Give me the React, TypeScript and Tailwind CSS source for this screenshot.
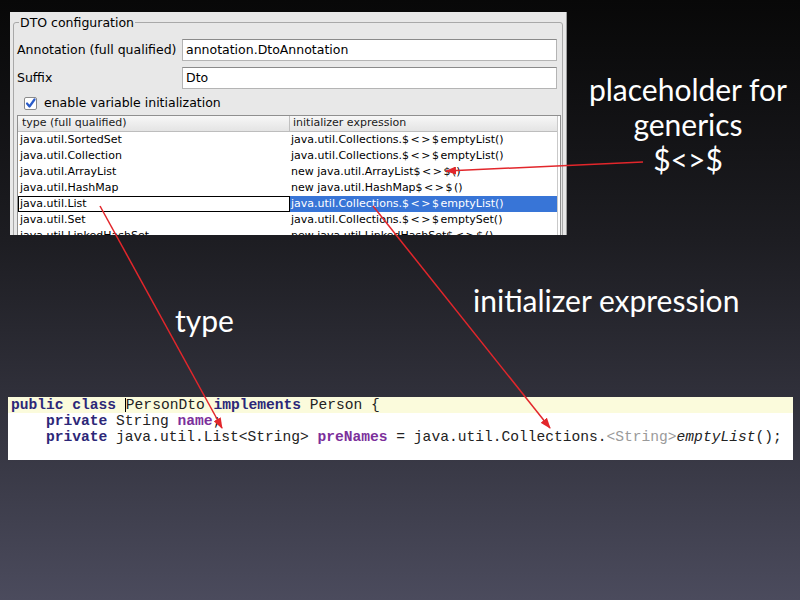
const rows = [
  ["java.util.SortedSet", "java.util.Collections.", "emptyList()"],
  ["java.util.Collection", "java.util.Collections.", "emptyList()"],
  ["java.util.ArrayList", "new java.util.ArrayList", "()"],
  ["java.util.HashMap", "new java.util.HashMap", "()"],
  ["java.util.List", "java.util.Collections.", "emptyList()", true],
  ["java.util.Set", "java.util.Collections.", "emptySet()"],
  ["java.util.LinkedHashSet", "new java.util.LinkedHashSet", "()"],
] as const;

function Field({ label, value }: { label: string; value: string }) {
  return (
    <div className="flex items-center h-[22px]">
      <div className="w-[168px] pl-[3px] shrink-0">{label}</div>
      <div className="flex-1 mr-[5px] h-[22px] bg-white border border-[#b4b4b4] border-t-[#8a8a8a] pl-[3px] flex items-center">
        {value}
      </div>
    </div>
  );
}

function ConfigPanel() {
  return (
    <div className="w-[557px] h-[223px] ml-[10px] shrink-0 overflow-hidden bg-[#e8e8e8] border-r border-[#9c9c9c] text-[12.5px] text-black font-['DejaVu_Sans',sans-serif]">
      <fieldset className="mx-[3px] mt-[2px] border border-[#a9a9a9] rounded-[3px] pb-[20px]">
        <legend className="ml-[5px] px-[1px] leading-[17px]">DTO configuration</legend>

        <div className="mt-[8px]">
          <Field label="Annotation (full qualified)" value="annotation.DtoAnnotation" />
        </div>
        <div className="mt-[6px]">
          <Field label="Suffix" value="Dto" />
        </div>

        {/* checkbox */}
        <div className="mt-[8px] h-[13px] pl-[10px] flex items-center gap-[7px]">
          <svg width="13" height="13" viewBox="0 0 13 13">
            <rect x="0.5" y="0.5" width="12" height="12" rx="1.5" fill="#fff" stroke="#8a8a8a" />
            <path d="M3 6.5 L5.5 9.5 L10.5 2.5" fill="none" stroke="#2a5bc8" strokeWidth="2.2" strokeLinecap="round" strokeLinejoin="round" />
          </svg>
          <span>enable variable initialization</span>
        </div>

        {/* table */}
        <div className="mt-[5px] ml-[3px] mr-[1px] h-[140px] bg-white border border-[#8f8f8f] flex text-[11px]">
          <div className="w-[540px] border-r border-[#c9c9c9]">
            <div className="flex h-[16px] items-center border-b border-[#bdbdbd] bg-linear-to-b from-[#f7f7f7] to-[#e4e4e4] text-[#1a1a1a]">
              <div className="w-[272px] h-full border-r border-[#c0c0c0] pl-[4px] flex items-center">type (full qualified)</div>
              <div className="pl-[3px]">initializer expression</div>
            </div>
            {rows.map(([type, pre, post, sel]) => (
              <div key={type} className="flex h-[16px]">
                <div
                  className={
                    sel
                      ? "w-[272px] border border-black pl-[1px] flex items-center"
                      : "w-[272px] pl-[2px] flex items-center"
                  }
                >
                  {type}
                </div>
                <div className={sel ? "flex-1 pl-[1px] flex items-center bg-[#3875d7] text-white" : "flex-1 pl-[1px] flex items-center"}>
                  {pre}
                  <span className="tracking-[1.5px]">$&lt;&gt;$</span>
                  {post}
                </div>
              </div>
            ))}
          </div>
        </div>
      </fieldset>
    </div>
  );
}

function CodeSnippet() {
  const kw = "font-bold text-[#2c2778]";
  const field = "font-bold text-[#7c2f9b]";
  return (
    <div className="ml-[8px] w-[785px] h-[63px] bg-white font-['Liberation_Mono',monospace] text-[14.6px] leading-[16px] text-[#222] whitespace-pre">
      <div className="bg-[#fbfbdc] pl-[3px]">
        <span className={kw}>public class </span>
        <span className="inline-block w-0 h-[14px] border-l border-black align-middle" />
        PersonDto <span className={kw}>implements</span> Person {"{"}
      </div>
      <div className="pl-[3px]">
        {"    "}
        <span className={kw}>private</span> String <span className={field}>name</span>;
      </div>
      <div className="pl-[3px]">
        {"    "}
        <span className={kw}>private</span> java.util.List&lt;String&gt; <span className={field}>preNames</span> = java.util.Collections.
        <span className="text-[#9a9a9a]">&lt;String&gt;</span>
        <span className="italic">emptyList</span>();
      </div>
    </div>
  );
}

export default function App() {
  return (
    <div className="relative w-[800px] h-[600px] overflow-hidden pt-[12px] bg-linear-to-b from-[#080808] via-[#1d1d22] via-40% to-[#4b4b5d] font-['Lato',sans-serif] text-white">
      <div className="flex h-[223px]">
        <ConfigPanel />
        <div className="flex-1 flex flex-col items-center pl-[9px] pt-[60px] text-[30px] leading-[35px]">
          <span>placeholder for</span>
          <span>generics</span>
          <span>$&lt;&gt;$</span>
        </div>
      </div>

      <div className="flex h-[162px] text-[30px] leading-[36px]">
        <div className="w-[473px] shrink-0 pl-[175px] pt-[67px]">type</div>
        <div className="pt-[47px]">initializer expression</div>
      </div>

      <CodeSnippet />

      {/* red arrows */}
      <svg className="absolute inset-0 pointer-events-none" width="800" height="600">
        <defs>
          <marker id="ah" markerWidth="11" markerHeight="8" refX="10" refY="4" orient="auto" markerUnits="userSpaceOnUse">
            <path d="M0,0 L11,4 L0,8 z" fill="#e2262b" />
          </marker>
        </defs>
        <line x1="643" y1="162" x2="446" y2="171" stroke="#e2262b" strokeWidth="1.5" markerEnd="url(#ah)" />
        <line x1="100" y1="206" x2="222" y2="428" stroke="#e2262b" strokeWidth="1.5" markerEnd="url(#ah)" />
        <line x1="373" y1="206" x2="550" y2="428" stroke="#e2262b" strokeWidth="1.5" markerEnd="url(#ah)" />
      </svg>
    </div>
  );
}
